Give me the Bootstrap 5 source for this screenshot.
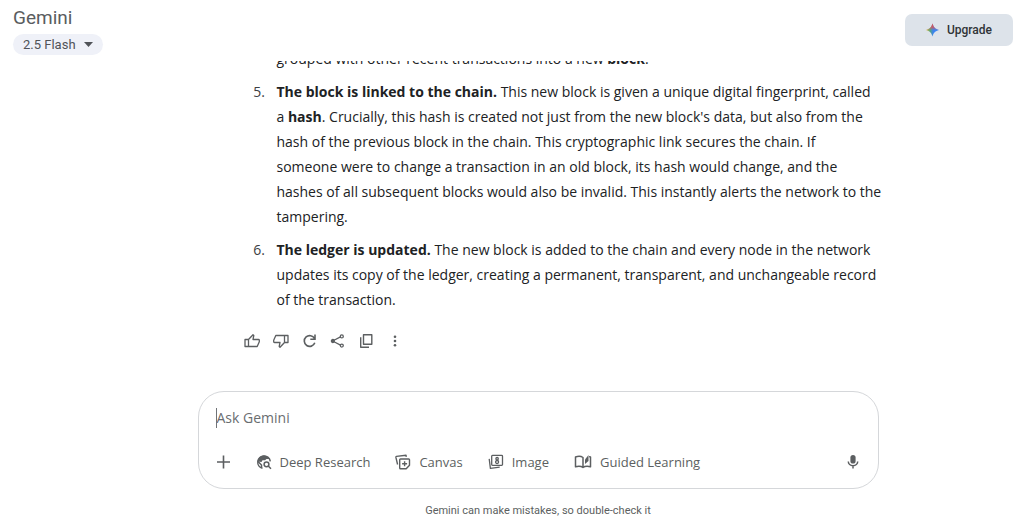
<!DOCTYPE html>
<html lang="en">
<head>
<meta charset="utf-8">
<meta name="viewport" content="width=device-width, initial-scale=1">
<title>Gemini</title>
<link rel="stylesheet" href="https://cdn.jsdelivr.net/npm/bootstrap@5.3.0/dist/css/bootstrap.min.css">
<style>
  body { font-family: "Open Sans", Roboto, sans-serif; color: #202224; background: #fff; }
  svg { display: block; }
  .brand-name { font-family: Roboto, sans-serif; font-size: 19px; line-height: 24px; color: #5a5d60; }
  .model-btn { --bs-btn-padding-x: 10px; --bs-btn-padding-y: 0; --bs-btn-font-size: 13px; --bs-btn-color: #505358; --bs-btn-bg: #eff1f8; --bs-btn-hover-bg: #e6e9f2; --bs-btn-border-width: 0; font-family: Roboto, sans-serif; line-height: 21px; }
  .upgrade-btn { --bs-btn-padding-x: 21px; --bs-btn-padding-y: 0; --bs-btn-font-size: 12px; --bs-btn-color: #303437; --bs-btn-bg: #dde3ea; --bs-btn-hover-bg: #d2d9e2; --bs-btn-border-width: 0; --bs-btn-border-radius: 7px; --bs-btn-font-weight: 500; font-family: Roboto, sans-serif; line-height: 32px; margin-top: 8px; }
  .top-bar { padding: 6px 11px 6px 13px; }
  .model-btn, .upgrade-btn { white-space: nowrap; }
  .stage { padding-left: 52px; }
  .column { width: 100%; max-width: 681px; }
  .answer { font-size: 14px; line-height: 25px; margin-right: -6px; }
  .answer ol { padding-left: 71px; }
  .answer li { margin-bottom: 8px; padding-left: 8px; }
  .answer li::marker { color: #3c4043; }
  .answer strong { font-weight: 700; }
  .tool-btn { --bs-btn-padding-x: 0; --bs-btn-padding-y: 0; --bs-btn-border-width: 0; --bs-btn-color: #5c5f61; --bs-btn-hover-color: #202224; --bs-btn-font-size: 13px; line-height: 20px; }
  .actions { gap: 13px; padding: 21px 0 42px 46px; }
  .composer { border: 1px solid #d5d7da; border-radius: 26px; padding: 16px 17px; }
  .prompt-box { font-size: 14px; line-height: 20px; color: #202224; padding: 0; border: 0; border-left: 1px solid #707377; }
  .prompt-box::placeholder { color: #6a6d70; opacity: 1; }
  .prompt-box:focus { outline: 0; }
  .tools { gap: 25px; margin-top: 24px; }
  .note { font-family: Roboto, sans-serif; font-size: 11px; line-height: 14px; color: #5c5f61; padding: 15px 0 7px; }
</style>
</head>
<body>
<div class="vh-100 d-flex flex-column overflow-hidden">
  <header class="top-bar d-flex justify-content-between align-items-start flex-shrink-0">
    <div>
      <div class="brand-name">Gemini</div>
      <button type="button" class="btn model-btn rounded-pill d-flex align-items-center gap-2 mt-1">2.5 Flash
        <svg width="9" height="5" viewBox="0 0 9 5" fill="currentColor" aria-hidden="true"><path d="M0 0h9L4.500 5z"/></svg>
      </button>
    </div>
    <button type="button" class="btn upgrade-btn d-flex align-items-center gap-2">
      <svg width="13" height="14" viewBox="0 0 14 14" aria-hidden="true">
        <defs>
          <linearGradient id="spark" x1="0" y1="0" x2="1" y2="0"><stop offset="0" stop-color="#f4b63a"/><stop offset=".3" stop-color="#58a878"/><stop offset=".55" stop-color="#3c83ee"/><stop offset="1" stop-color="#3f8af5"/></linearGradient>
          <linearGradient id="tip" x1="0" y1="0" x2="0" y2="1"><stop offset="0" stop-color="#ea4d4a"/><stop offset=".3" stop-color="#ea4d4a" stop-opacity=".7"/><stop offset=".5" stop-color="#ea4d4a" stop-opacity="0"/></linearGradient>
        </defs>
        <path fill="url(#spark)" d="M7 0C8.200 4 10 5.800 14 7C10 8.200 8.200 10 7 14C5.800 10 4 8.200 0 7C4 5.800 5.800 4 7 0z"/>
        <path fill="url(#tip)" d="M7 0C8.200 4 10 5.800 14 7C10 8.200 8.200 10 7 14C5.800 10 4 8.200 0 7C4 5.800 5.800 4 7 0z"/>
      </svg>
      Upgrade
    </button>
  </header>

  <main class="stage flex-grow-1 overflow-hidden d-flex flex-column justify-content-end align-items-center">
    <div class="column">
      <div class="answer">
        <ol class="mb-0" start="4">
          <li class="list-unstyled">grouped with other recent transactions into a new <strong>block</strong>.</li>
          <li><strong>The block is linked to the chain.</strong> This new block is given a unique digital fingerprint, called<br>a <strong>hash</strong>. Crucially, this hash is created not just from the new block's data, but also from the<br>hash of the previous block in the chain. This cryptographic link secures the chain. If<br>someone were to change a transaction in an old block, its hash would change, and the<br>hashes of all subsequent blocks would also be invalid. This instantly alerts the network to the<br>tampering.</li>
          <li class="mb-0"><strong>The ledger is updated.</strong> The new block is added to the chain and every node in the network updates its copy of the ledger, creating a permanent, transparent, and unchangeable record of the transaction.</li>
        </ol>
      </div>
      <div class="actions d-flex">
        <button type="button" class="btn tool-btn" aria-label="Good response"><svg width="16" height="16" viewBox="0 0 16 16" fill="none" stroke="currentColor" stroke-width="1.300" stroke-linejoin="round"><path d="M1 6.500h3.500v7H1zM4.500 6.500L9 1.700l.8.8L9 6.500h5.500q.8 0 .8.800v1.400l-2.100 4.800H4.500"/></svg></button>
        <button type="button" class="btn tool-btn" aria-label="Bad response"><svg width="16" height="16" viewBox="0 0 16 16" fill="none" stroke="currentColor" stroke-width="1.300" stroke-linejoin="round"><path d="M15 9.500h-3.500v-7H15zM11.500 9.500L7 14.300l-.8-.8L7 9.500H1.500q-.8 0-.8-.800V7.300l2.100-4.800h8.700"/></svg></button>
        <button type="button" class="btn tool-btn" aria-label="Redo"><svg width="15" height="16" viewBox="0 0 15 16" fill="none" stroke="currentColor" stroke-width="1.600"><path d="M12.500 5.500A5.400 5.400 0 1 0 12.800 9.800M13 1.500v4.700H8.300"/></svg></button>
        <button type="button" class="btn tool-btn" aria-label="Share"><svg width="15" height="16" viewBox="0 0 15 16" fill="none" stroke="currentColor" stroke-width="1.300"><path d="M4 7.300L11 3.600M4 8.700l7 3.700"/><circle cx="2.900" cy="8" r="1.500" fill="currentColor"/><circle cx="11.800" cy="3.400" r="1.500"/><circle cx="11.800" cy="12.600" r="1.500"/></svg></button>
        <button type="button" class="btn tool-btn" aria-label="Copy"><svg width="16" height="16" viewBox="0 0 16 16" fill="none" stroke="currentColor" stroke-width="1.400" stroke-linejoin="round"><path d="M5.500 1.700h8.300v9.600H5.500zM2.700 4.300v9.900h8.300"/></svg></button>
        <button type="button" class="btn tool-btn" aria-label="More"><svg width="16" height="16" viewBox="0 0 16 16" fill="currentColor"><circle cx="8" cy="3.800" r="1.300"/><circle cx="8" cy="8" r="1.300"/><circle cx="8" cy="12.200" r="1.300"/></svg></button>
      </div>
    </div>
  </main>

  <footer class="stage flex-shrink-0 d-flex flex-column align-items-center">
    <form class="column composer" onsubmit="return false">
      <label class="d-block" for="prompt"><input id="prompt" type="text" class="prompt-box d-block w-100 bg-transparent" placeholder="Ask Gemini" aria-label="Ask Gemini" autocomplete="off"></label>
      <div class="tools d-flex align-items-center">
        <button type="button" class="btn tool-btn" aria-label="Add files"><svg width="15" height="14" viewBox="0 0 15 14" fill="none" stroke="currentColor" stroke-width="1.600"><path d="M7.500 .5v13M1 7h13"/></svg></button>
        <button type="button" class="btn tool-btn d-flex align-items-center gap-2"><svg width="16" height="16" viewBox="0 0 16 16" fill="none" stroke="currentColor" stroke-width="1.500"><path d="M6.500 14.300A6.300 6.300 0 1 1 14.300 7.300"/><path fill="currentColor" stroke="none" d="M1.500 7.500C2 3.500 5 1.500 8 1.500c2.500 0 4.500 1.300 5.600 3.400L10.500 5 9 6.200 6.500 6.200 5.500 8z"/><path d="M2 7.500l3.500 3.500v2.500"/><circle cx="10.500" cy="10.300" r="2.400"/><path d="M12.200 12l2.800 2.800"/></svg>Deep Research</button>
        <button type="button" class="btn tool-btn d-flex align-items-center gap-2"><svg width="16" height="16" viewBox="0 0 16 16" fill="none" stroke="currentColor" stroke-width="1.400" stroke-linejoin="round"><path d="M2.600 10.500L.9 3.400q-.1-.8.600-1L11 1.200l.3 1.700M5.500 5h8.200q.8 0 .8.800v5.400L11.200 14.700H5.500q-.8 0-.8-.800V5.800q0-.8.800-.8zM9.600 7.200v5M7.100 9.700h5"/></svg>Canvas</button>
        <button type="button" class="btn tool-btn d-flex align-items-center gap-2"><svg width="16" height="16" viewBox="0 0 16 16" fill="none" stroke="currentColor" stroke-width="1.300" stroke-linejoin="round"><path d="M4.500 1.400h9.200q.8 0 .8.800v8.300q0 .8-.8.800H4.500q-.8 0-.8-.800V2.200q0-.8.800-.8zM1.200 4.800l1.200 9.500 9.300-1.200"/><circle cx="9.100" cy="4.700" r="1.200"/><circle cx="9.100" cy="8" r="1.500"/></svg>Image</button>
        <button type="button" class="btn tool-btn d-flex align-items-center gap-2"><svg width="18" height="16" viewBox="0 0 18 16" fill="none" stroke="currentColor" stroke-width="1.500" stroke-linejoin="round"><path d="M9 13.500Q6.500 11.500 1.500 12.700V3Q6 1.500 9 3.500zQ11.500 11.500 16.500 12.700V3l-1.500-.4"/><path fill="currentColor" stroke="none" d="M11 5.500L14.500 1v6L11 10z"/></svg>Guided Learning</button>
        <button type="button" class="btn tool-btn ms-auto" aria-label="Use microphone"><svg width="16" height="16" viewBox="0 0 16 16" fill="none" stroke="currentColor" stroke-width="1.500"><rect x="5.400" y="1" width="5.200" height="8.500" rx="2.600" fill="currentColor" stroke="none"/><path d="M3.300 7.500a4.700 4.200 0 0 0 9.400 0M8 11.700v2.800"/></svg></button>
      </div>
    </form>
    <div class="note">Gemini can make mistakes, so double-check it</div>
  </footer>
</div>
<script src="https://cdn.jsdelivr.net/npm/bootstrap@5.3.0/dist/js/bootstrap.bundle.min.js"></script>
</body>
</html>
